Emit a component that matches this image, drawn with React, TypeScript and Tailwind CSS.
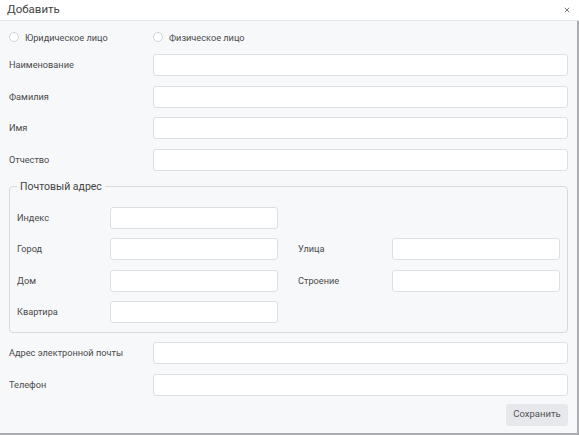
import { X } from 'lucide-react';

const font = { fontFamily: 'Roboto, "Noto Sans", sans-serif' };

function Field({ label }: { label: string }) {
  return (
    <div className="flex items-center">
      <span className="w-[144px] shrink-0 text-[9.2px] text-[#4a4a4a]">{label}</span>
      <input className="h-[22px] flex-1 rounded-[3px] border border-[#dcdfe4] bg-white outline-none" />
    </div>
  );
}

function SubField({ label, labelWidth }: { label: string; labelWidth: string }) {
  return (
    <div className="flex items-center">
      <span className={`${labelWidth} shrink-0 text-[9.2px] text-[#4a4a4a]`}>{label}</span>
      <input className="h-[22px] w-[168px] rounded-[3px] border border-[#dcdfe4] bg-white outline-none" />
    </div>
  );
}

function Radio({ label }: { label: string }) {
  return (
    <label className="flex items-center gap-[6px] text-[9.2px] text-[#4a4a4a]">
      <span className="h-[10px] w-[10px] rounded-full border border-[#cfd3d9] bg-white" />
      {label}
    </label>
  );
}

export default function App() {
  return (
    <div className="flex h-[435px] w-[579px] flex-col bg-white" style={font}>
      <div className="flex h-[21px] items-center justify-between border-b border-[#e3e5e9] pl-[7px] pr-[8px]">
        <span className="text-[11.5px] text-[#444]">Добавить</span>
        <X size={8} strokeWidth={3} className="text-[#777]" />
      </div>
      <div className="flex flex-1 flex-col border-r-2 border-b-2 border-[#a9abae] bg-[#f7f8fa] pl-[9px] pr-[9px]">
        <div className="flex h-[33px] items-center">
          <div className="w-[144px]">
            <Radio label="Юридическое лицо" />
          </div>
          <Radio label="Физическое лицо" />
        </div>
        <div className="flex flex-col gap-[9.5px]">
          <Field label="Наименование" />
          <Field label="Фамилия" />
          <Field label="Имя" />
          <Field label="Отчество" />
        </div>
        <fieldset className="mt-[8px] rounded-[4px] border border-[#d6d9de] pb-[9px] pl-[7px] pr-[7px]">
          <legend className="px-[3px] text-[10.5px] leading-[16px] text-[#444]">Почтовый адрес</legend>
          <div className="mt-[12px] grid grid-cols-[auto_auto] justify-between gap-y-[9.5px]">
            <SubField label="Индекс" labelWidth="w-[93px]" />
            <div />
            <SubField label="Город" labelWidth="w-[93px]" />
            <SubField label="Улица" labelWidth="w-[94px]" />
            <SubField label="Дом" labelWidth="w-[93px]" />
            <SubField label="Строение" labelWidth="w-[94px]" />
            <SubField label="Квартира" labelWidth="w-[93px]" />
          </div>
        </fieldset>
        <div className="mt-[9px] flex flex-col gap-[9.5px]">
          <Field label="Адрес электронной почты" />
          <Field label="Телефон" />
        </div>
        <div className="mt-[8px] flex justify-end">
          <button className="h-[22px] w-[62px] rounded-[3px] bg-[#e6e8ec] text-[9.5px] text-[#555]">Сохранить</button>
        </div>
      </div>
    </div>
  );
}
